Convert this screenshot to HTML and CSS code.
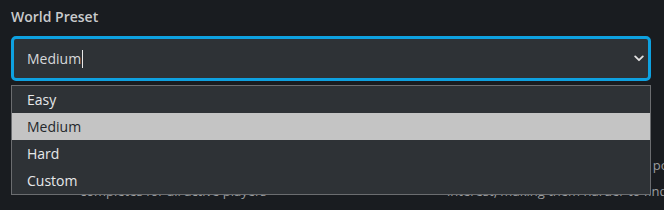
FILE: index.html
```html
<!DOCTYPE html>
<html>
<head>
<meta charset="utf-8">
<link rel="stylesheet" href="styles.css">
</head>
<body>
<div class="page">
  <div class="field">
    <label class="label">World Preset</label>
    <div class="select">
      <span class="value">Medium</span><span class="caret"></span>
      <svg class="chevron" width="10" height="7" viewBox="0 0 10 7"><path d="M1.2 1.4 L5 5.2 L8.8 1.4" fill="none" stroke="#e2e2e2" stroke-width="1.8" stroke-linecap="round" stroke-linejoin="round"/></svg>
    </div>
    <ul class="options">
      <li class="option">Easy</li>
      <li class="option selected">Medium</li>
      <li class="option">Hard</li>
      <li class="option">Custom</li>
    </ul>
  </div>
  <div class="presets">
    <div class="preset left">
      <p class="line">Standard pacing, and the season</p>
      <p class="line">completes for all active players</p>
    </div>
    <div class="preset right">
      <p class="line tight">Resource nodes spawn in random points of</p>
      <p class="line">interest, making them harder to find</p>
    </div>
  </div>
</div>
</body>
</html>
```
FILE: styles.css
```css
html, body {
  margin: 0;
  padding: 0;
  background: #191c20;
  overflow: hidden;
  width: 664px;
  height: 210px;
}
body {
  font-family: "Open Sans", "Noto Sans", sans-serif;
}
.page {
  padding: 7px 13px 0 11px;
}
.field {
  position: relative;
  display: flex;
  flex-direction: column;
}
.label {
  font-size: 14px;
  font-weight: 600;
  color: #c9cbcd;
  line-height: 20px;
  height: 20px;
  margin-bottom: 9px;
}
.select {
  box-sizing: border-box;
  height: 45px;
  width: 640px;
  border: 3px solid #0ea1e0;
  border-radius: 5px;
  background: #2e3236;
  display: flex;
  align-items: center;
  padding: 0 0 0 13px;
  position: relative;
}
.value {
  font-size: 14px;
  color: #d6d8da;
  line-height: 20px;
}
.caret {
  display: inline-block;
  width: 1px;
  height: 18px;
  background: #e8e8e8;
  margin-left: 1px;
}
.chevron {
  position: absolute;
  right: 4px;
  top: 16px;
}
.options {
  position: absolute;
  top: 78px;
  left: 0;
  width: 640px;
  box-sizing: border-box;
  margin: 0;
  padding: 0;
  list-style: none;
  border: 1px solid #6b6d70;
  background: #2e3236;
  z-index: 2;
}
.option {
  height: 27px;
  line-height: 27px;
  font-size: 14px;
  color: #e6e8ea;
  padding-left: 15px;
}
.option.selected {
  background: #c4c4c4;
  color: #24282c;
}
.presets {
  display: grid;
  grid-template-columns: 436px 1fr;
  margin-top: 71px;
}
.preset {
  font-size: 13px;
  color: #9b9d9f;
}
.preset.left {
  padding-left: 69px;
}
.line {
  margin: 0;
  line-height: 26px;
  white-space: nowrap;
}
.line.tight {
  word-spacing: -0.7px;
}
```
